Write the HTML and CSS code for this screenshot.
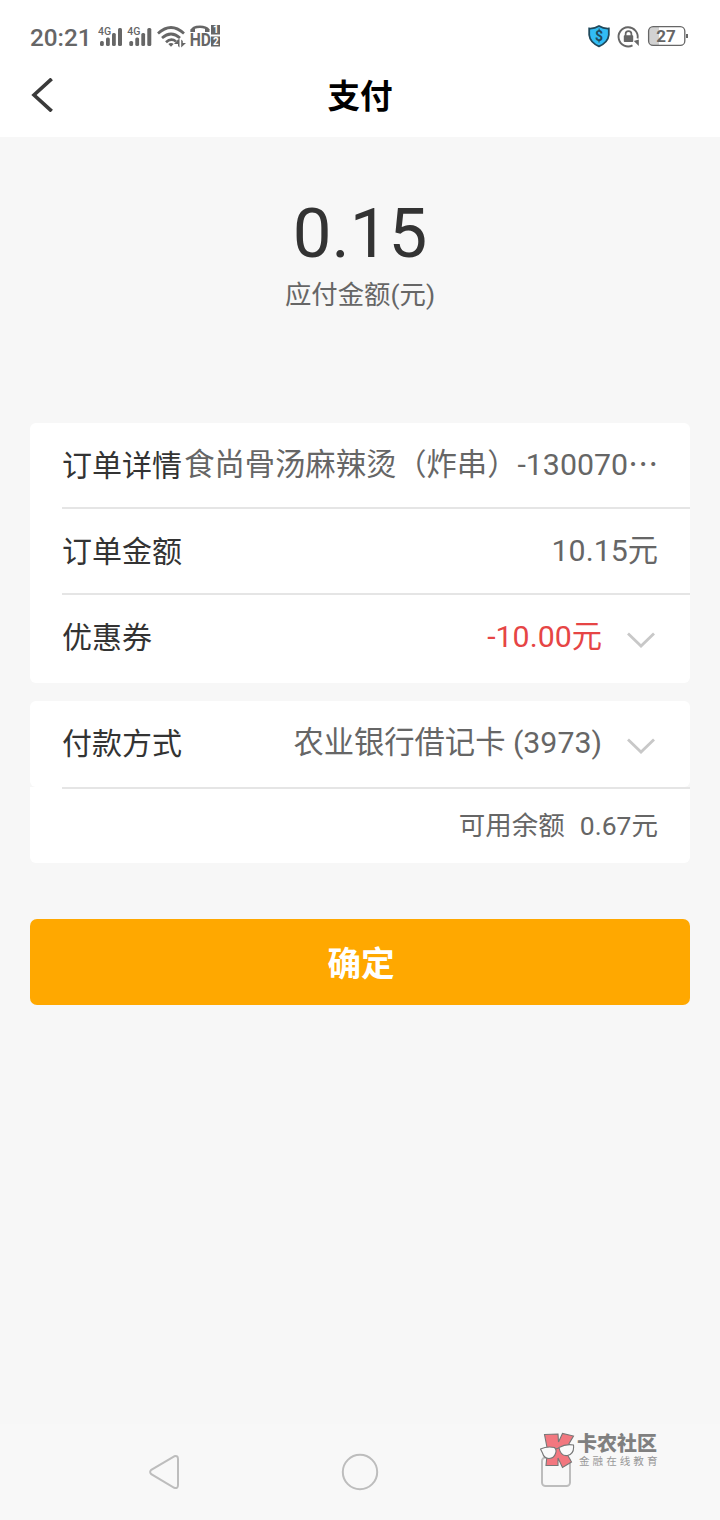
FILE: index.html
```html
<!DOCTYPE html>
<html lang="zh-CN">
<head>
<meta charset="utf-8">
<title>支付</title>
<link rel="stylesheet" href="styles.css">
</head>
<body>
<div class="screen">
  <header class="status-bar">
    <div class="status-left">
      <span class="clock">20:21</span>
      <svg class="status-icons" width="124" height="28" viewBox="98 22 124 28" fill="none" stroke="#666">
        <g id="signal" fill="#666" stroke="none">
          <text x="98" y="35" class="net">4G</text>
          <rect x="100" y="41" width="3.8" height="5" rx="1.5"/>
          <rect x="106" y="37.5" width="3.8" height="8.5" rx="1.5"/>
          <rect x="112" y="33" width="3.8" height="13" rx="1.5"/>
          <rect x="118" y="28" width="4" height="18" rx="1.5"/>
        </g>
        <use href="#signal" x="29.3"/>
        <path d="M158 33.500Q171 21.500 184 33.500M162 38Q171 30 180 38M166 42.300Q171 37.500 176 41.500" stroke-width="2.7"/>
        <path d="M168.300 44Q171 42.200 173.700 44L171 46.800Z" fill="#666" stroke="none"/>
        <path d="M179.500 39V47.500L178 46V44H174L178 39.500ZM181.200 47.500V39.500L182.800 41V43H186Z" fill="#666" stroke="none"/>
        <path d="M192 32V30.500Q192.500 26.800 200 26.800Q206 26.800 208.500 30" stroke-width="2.600"/>
        <path d="M190.500 29H195V32H190.500ZM205 29H209.500V32H205Z" fill="#666" stroke="none"/>
        <text x="189.700" y="46.300" class="hd" textLength="21.300" lengthAdjust="spacingAndGlyphs">HD</text>
        <path d="M211 25H220V34.500H211ZM211 36.500H220V46.500H211Z" fill="#666" stroke="none"/>
        <text x="213" y="33.300" class="sim">1</text>
        <text x="213" y="45.100" class="sim">2</text>
      </svg>
    </div>
    <svg class="status-right" width="104" height="28" viewBox="586 22 104 28" fill="none" stroke="#666">
      <path d="M599 26Q603.500 28.800 608.800 28.500V35Q608 42.500 599 46.300Q590 42.500 589.200 35V28.500Q594.500 28.800 599 26Z" fill="#32bdf5" stroke="#20495c" stroke-width="1.800"/>
      <text x="599" y="40.800" text-anchor="middle" class="dollar">$</text>
      <path d="M632.500 45.400A9.600 9.600 0 1 1 637.600 38.500" stroke-width="1.900"/>
      <path d="M633.800 41L638.800 46V39.500Z" fill="#666" stroke="none"/>
      <rect x="623.800" y="35.300" width="9.400" height="6.700" rx=".8" fill="#666" stroke="none"/>
      <path d="M625.600 36V34Q625.600 31.200 628.500 31.200T631.400 34V36" stroke-width="1.700"/>
      <path d="M652 27H659V45H652Q649 45 649 42V30Q649 27 652 27Z" fill="#d2d2d2" stroke="none"/>
      <rect x="648.600" y="26.600" width="36.200" height="18.800" rx="4.500" stroke-width="1.300"/>
      <rect x="686" y="34" width="2" height="4" fill="#666" stroke="none"/>
      <text x="666" y="42" text-anchor="middle" class="battery">27</text>
    </svg>
  </header>

  <nav class="title-bar">
    <svg class="back" width="24" height="34" viewBox="0 0 24 34"><path d="M21.700 .800L4 17L21.700 33.200" fill="none" stroke="#3a3a3a" stroke-width="3.600"/></svg>
    <h1 class="title">支付</h1>
  </nav>

  <main class="content">
    <section class="amount">
      <div class="amount-value">0.15</div>
      <div class="amount-label">应付金额(元)</div>
    </section>

    <section class="card order">
      <div class="row">
        <span class="label">订单详情</span>
        <span class="value detail">食尚骨汤麻辣烫（炸串）-130070<span class="dots">⋯</span></span>
      </div>
      <div class="row divided"><span class="label">订单金额</span><span class="value">10.15元</span></div>
      <div class="row divided coupon">
        <span class="label">优惠券</span><span class="value discount">-10.00元</span>
        <svg class="chevron" width="28" height="16" viewBox="0 0 28 16"><path d="M1 1.500L14 14L27 1.500"/></svg>
      </div>
    </section>

    <section class="payment">
      <div class="card method">
        <div class="row">
          <span class="label">付款方式</span><span class="value">农业银行借记卡 (3973)</span>
          <svg class="chevron" width="28" height="16" viewBox="0 0 28 16"><path d="M1 1.500L14 14L27 1.500"/></svg>
        </div>
      </div>
      <div class="balance"><div class="balance-row"><span>可用余额</span><span>0.67元</span></div></div>
    </section>

    <button class="confirm" type="button">确定</button>
  </main>

  <footer class="system-nav">
    <svg width="32" height="38" viewBox="0 0 32 38"><path d="M26.200 3.300L3.300 16.800Q1 19 3.300 21.200L26.200 34.800Q30 36 30 32V6Q30 2 26.200 3.300Z"/></svg>
    <svg width="38" height="38" viewBox="0 0 38 38"><circle cx="19" cy="19" r="17.200"/></svg>
    <svg width="32" height="38" viewBox="0 0 32 38"><rect x="2" y="4.500" width="28" height="28.500" rx="3.500"/></svg>
    <div class="watermark">
      <svg class="mascot" width="36" height="38" viewBox="540 1431 36 38" stroke="#777" stroke-width="1.100">
        <path d="M544.500 1434.500L558 1434L558.500 1442L562.500 1433.500L573.500 1436L565 1450.500L571.500 1462L562.500 1467.500L558 1458V1465.500H546L547.500 1450Z" fill="#f2777f"/>
        <path d="M540.500 1449Q547 1446 554.500 1447.500Q557 1450 555.500 1453.500Q554 1458.500 549 1458.500T542.500 1453ZM559 1447.500Q566 1443.500 573.500 1445Q574.500 1454 567.500 1455.500Q560.500 1456.500 559 1447.500Z" fill="#fafafa"/>
        <path d="M555.500 1449L559 1448" fill="none"/>
      </svg>
      <div class="brand"><span class="brand-name">卡农社区</span><span class="brand-sub">金融在线教育</span></div>
    </div>
  </footer>
</div>
</body>
</html>
```
FILE: styles.css
```css
* { box-sizing: border-box; }
body { margin: 0; font-family: Roboto, "Noto Sans CJK SC", sans-serif; color: #333; }
.screen { width: 720px; height: 1520px; display: flex; flex-direction: column; background: #f7f7f7; }

.status-bar { height: 72px; padding: 0 30px; display: flex; justify-content: space-between; align-items: center; background: #fff; }
.status-left { display: flex; align-items: center; gap: 7px; }
.clock { width: 61px; font-size: 24.3px; font-weight: 500; line-height: 28px; padding-top: 3px; color: #666; white-space: nowrap; }
.status-icons text, .status-right text { stroke: none; fill: #666; font-family: Roboto, sans-serif; }
.status-icons .net { font-size: 10.5px; font-weight: 500; }
.status-icons .hd { font-size: 19px; font-weight: 700; }
.status-icons .sim { font-size: 10px; font-weight: 700; fill: #fff; }
.status-right .dollar { font-size: 14px; font-weight: 700; fill: #20495c; }
.status-right .battery { font-size: 17px; font-weight: 700; }

.title-bar { height: 65px; padding: 0 30px 18px; display: grid; grid-template-columns: 1fr auto 1fr; align-items: center; background: #fff; }
.back { margin-bottom: 1px; }
.title { grid-column: 2; margin: 0; padding-top: 4px; font-size: 32.6px; font-weight: 700; line-height: 43px; color: #000; }

.content { flex: 1; padding: 0 30px; display: flex; flex-direction: column; }
.amount { height: 286px; padding-top: 56px; text-align: center; }
.amount-value { font-size: 69px; line-height: 82px; }
.amount-label { padding-top: 1px; font-size: 26.4px; line-height: 38px; color: #666; }

.card { background: #fff; border-radius: 6px; }
.order { height: 260px; }
.row { height: 86px; margin-left: 32px; padding-right: 32px; display: flex; align-items: center; font-size: 30.3px; line-height: 44px; white-space: nowrap; }
.divided { border-top: 2px solid #e5e5e5; }
.order .row:first-child { height: 84px; }
.row.coupon { height: 88px; padding-bottom: 2px; }
.label { padding-top: 2px; font-size: 30px; color: #333; }
.value { margin-left: auto; color: #666; }
.dots { display: inline-block; width: 30px; font-family: "Noto Sans CJK SC", sans-serif; line-height: 30px; }
.discount { color: #e64545; }
.chevron { margin: 6px 3px 0 25px; flex: none; fill: none; stroke: #c8c8c8; stroke-width: 2.8; }

.payment { margin-top: 18px; }
.method { height: 86px; }
.method .row { padding-bottom: 2px; }
.balance { height: 76px; background: #fff; border-radius: 0 0 6px 6px; }
.balance-row { height: 76px; margin-left: 32px; padding-right: 32px; display: flex; justify-content: flex-end; align-items: center; gap: 15px; border-top: 2px solid #e5e5e5; font-size: 26.5px; line-height: 38px; color: #666; }

.confirm { width: 100%; height: 86px; margin-top: 56px; padding: 5px 0 0 2px; border: 0; border-radius: 7px; background: #ffa800; color: #fff; font: 700 33.6px/50px Roboto, "Noto Sans CJK SC", sans-serif; }

.system-nav { position: relative; height: 96px; padding: 0 148px; display: flex; justify-content: space-between; align-items: center; background: #f8f8f8; }
.system-nav > svg { fill: none; stroke: #bdbdbd; stroke-width: 2; }
.watermark { position: absolute; left: 540px; top: 6px; display: flex; gap: 1px; }
.mascot { margin-top: 1px; }
.brand { display: flex; flex-direction: column; color: #808080; font-family: "Noto Sans CJK SC", sans-serif; white-space: nowrap; }
.brand-name { font-size: 20px; font-weight: 900; line-height: 25px; }
.brand-sub { padding-left: 2px; font-size: 10.6px; letter-spacing: 3px; line-height: 12px; color: #999; }
```
